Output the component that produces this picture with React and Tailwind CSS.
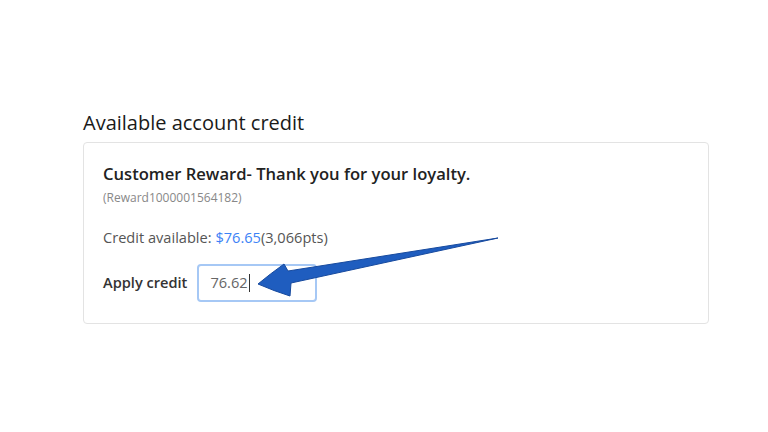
export default function App() {
  return (
    <div className="relative min-h-[432px] w-[768px] bg-white font-['Open_Sans',sans-serif]">
      <div className="pl-[83px] pt-[109px] w-[709px]">
        <h2 className="text-[20px] leading-[28px] text-[#1a1a1a]">Available account credit</h2>
        <div className="mt-[5px] rounded-[4px] border border-[#e3e3e3] px-[19px] pt-[19px] pb-[21px]">
          <p className="text-[16.6px] leading-[24px] font-semibold text-[#222]">Customer Reward- Thank you for your loyalty.</p>
          <p className="mt-[3px] text-[12px] leading-[18px] text-[#888]">(Reward1000001564182)</p>
          <p className="mt-[20px] text-[14.6px] leading-[20px] text-[#555]">
            Credit available: <span className="text-[#3b82f6]">$76.65</span>(3,066pts)
          </p>
          <div className="mt-[17px] flex items-center gap-[10px]">
            <span className="text-[14.6px] font-semibold text-[#333]">Apply credit</span>
            <div className="flex h-[38px] w-[120px] items-center rounded-[4px] border-2 border-[#a6c8f5] px-[11px] text-[14.6px] text-[#666]">
              76.62<span className="ml-[1px] inline-block h-[18px] w-[1px] bg-[#333]" />
            </div>
          </div>
        </div>
      </div>
      <svg className="absolute left-0 top-0" width="768" height="432" viewBox="0 0 768 432">
        <path
          d="M498 238 L288 271 L284 264 Q270 274 258 284 Q274 291 290 296 L291 283 Z"
          fill="#1f5dbf"
          stroke="#174a9e"
          strokeWidth="1"
          strokeLinejoin="round"
        />
      </svg>
    </div>
  )
}
